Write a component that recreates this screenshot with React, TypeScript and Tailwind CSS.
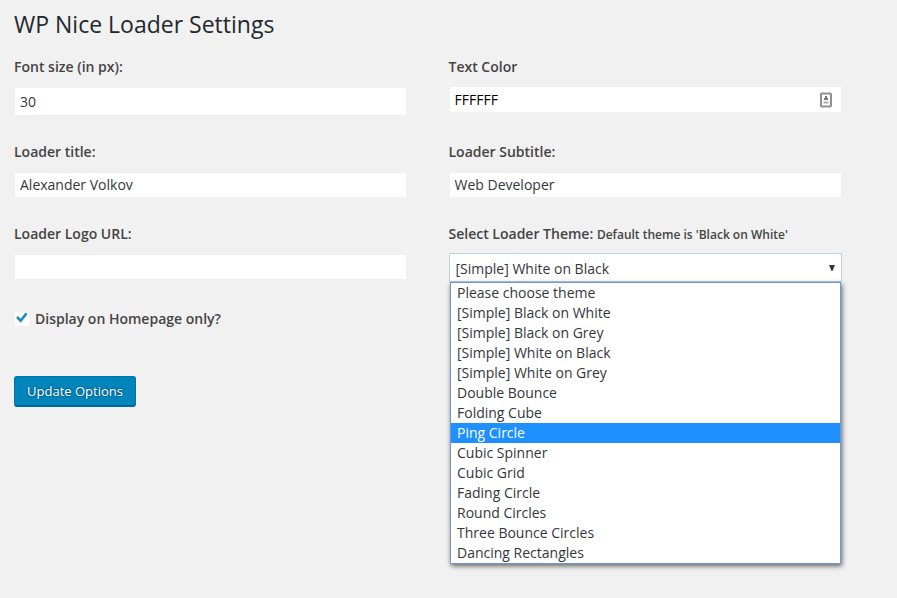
const label = "text-[14px] font-semibold leading-5 text-[#444] whitespace-nowrap";
const input = "block w-[393px] border border-[#f0f0f0] bg-white text-[14px] leading-5 outline-none";
const themes = [
  "Please choose theme", "[Simple] Black on White", "[Simple] Black on Grey",
  "[Simple] White on Black", "[Simple] White on Grey", "Double Bounce", "Folding Cube",
  "Ping Circle", "Cubic Spinner", "Cubic Grid", "Fading Circle", "Round Circles",
  "Three Bounce Circles", "Dancing Rectangles",
];

function Field({ title, value, className, inputClass }: { title: string; value: string; className: string; inputClass: string }) {
  return (
    <div className={className}>
      <div className={label}>{title}</div>
      <input className={`${input} ${inputClass}`} defaultValue={value} />
    </div>
  );
}

export default function App() {
  return (
    <main className="h-[598px] w-[897px] overflow-hidden bg-[#f1f1f1] pl-[14px] font-['Open_Sans',sans-serif] text-[#444]">
      <h1 className="pt-[10px] text-[23px] font-normal leading-[29px] text-[#23282d]">WP Nice Loader Settings</h1>
      <div className="mt-[18px] flex">
        <div className="w-[435px]">
          <Field title="Font size (in px):" value="30" className="h-[85px]" inputClass="mt-[10px] h-[29px] px-[5px] text-[#32373c]" />
          <Field title="Loader title:" value="Alexander Volkov" className="h-[82px]" inputClass="mt-[10px] h-[26px] px-[5px] pb-px text-[#32373c]" />
          <Field title="Loader Logo URL:" value="" className="h-[85px]" inputClass="mt-[10px] h-[26px] px-[5px] text-[#32373c]" />
          <div className="flex items-center">
            <div className="mr-[5px] flex h-4 w-4 justify-center border border-[#f0f0f0] bg-white">
              <svg className="h-3 w-3" viewBox="0 0 12 12" fill="none"><path d="M1 5L4.7 8.7L10.6 1.2" stroke="#1e8cbe" strokeWidth="2.6" /></svg>
            </div>
            <span className={label}>Display on Homepage only?</span>
          </div>
          <button className="mt-[47px] h-[31px] w-[122px] rounded-[3px] border border-b-2 border-[#0073aa] border-b-[#006799] bg-[#0085ba] pb-px text-[13px] leading-[26px] text-white [text-shadow:0_-1px_1px_#006799,1px_0_1px_#006799,0_1px_1px_#006799,-1px_0_1px_#006799]">Update Options</button>
        </div>
        <div className="-ml-[0.5px] w-[394px]">
          <div className="relative h-[85px]">
            <Field title="Text Color" value="FFFFFF" className="" inputClass="mt-[9px] ml-[0.5px] h-[27px] px-[4.5px] text-black" />
            <svg className="absolute left-[371.5px] top-[35px] h-4 w-3" viewBox="0 0 12 16" fill="none">
              <rect x="1" y="1.5" width="10" height="13" rx="0.7" stroke="#909090" strokeWidth="2" />
              <path d="M5 4h2v2h1v2H4V6h1z" fill="#777" />
              <path d="M3.5 9.5h5v2h-5z" fill="#aaa" />
            </svg>
          </div>
          <Field title="Loader Subtitle:" value="Web Developer" className="h-[82px]" inputClass="mt-[10px] ml-[0.5px] h-[26px] px-[4.5px] pb-px text-[#32373c]" />
          <div className={label}>Select Loader Theme: <span className="text-[12px]">Default theme is 'Black on White'</span></div>
          <div className="ml-[0.5px] mt-[8px] flex h-[29px] w-[393px] items-center justify-between border border-[#b9d4e7] bg-white pl-[5.5px] pr-[6px] pt-px text-[14px] text-[#32373c]">
            <span>[Simple] White on Black</span>
            <svg className="-mt-px h-[6px] w-[6px]" viewBox="0 0 6 6"><path d="M0 0h6L3.5 6h-1z" fill="#32373c" /></svg>
          </div>
          <div className="relative ml-[1.5px] w-[391px] border border-[#6f97d2] bg-white shadow-[1px_2px_5px_rgba(0,0,0,0.6)]">
            {themes.map(theme => <div key={theme} className={`h-5 pl-[6px] text-[14px] leading-5 ${theme === "Ping Circle" ? "bg-[#1e90ff] text-white" : "text-[#32373c]"}`}>{theme}</div>)}
          </div>
        </div>
      </div>
    </main>
  );
}
